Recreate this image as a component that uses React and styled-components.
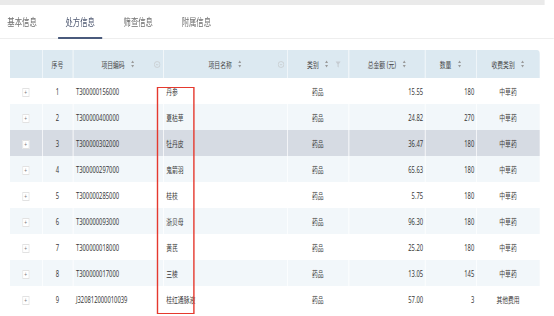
import React from 'react'
import styled, { createGlobalStyle } from 'styled-components'

const GlobalStyle = createGlobalStyle`
  body {
    margin: 0;
    background: #fff;
    font-family: "Noto Sans", "Noto Sans CJK SC", sans-serif;
  }
`

const rows = [
  { no: 1, code: 'T300000156000', name: '丹参', type: '药品', amount: '15.55', qty: 180, fee: '中草药' },
  { no: 2, code: 'T300000400000', name: '夏枯草', type: '药品', amount: '24.82', qty: 270, fee: '中草药' },
  { no: 3, code: 'T300000302000', name: '牡丹皮', type: '药品', amount: '36.47', qty: 180, fee: '中草药' },
  { no: 4, code: 'T300000297000', name: '鬼箭羽', type: '药品', amount: '65.63', qty: 180, fee: '中草药' },
  { no: 5, code: 'T300000285000', name: '桂枝', type: '药品', amount: '5.75', qty: 180, fee: '中草药' },
  { no: 6, code: 'T300000093000', name: '浙贝母', type: '药品', amount: '96.30', qty: 180, fee: '中草药' },
  { no: 7, code: 'T300000018000', name: '黄芪', type: '药品', amount: '25.20', qty: 180, fee: '中草药' },
  { no: 8, code: 'T300000017000', name: '三棱', type: '药品', amount: '13.05', qty: 145, fee: '中草药' },
  { no: 9, code: 'J320812000010039', name: '桂红通脉液', type: '药品', amount: '57.00', qty: 3, fee: '其他费用' },
]

const tabs = ['基本信息', '处方信息', '筛查信息', '附属信息']

// the screen is drawn condensed: lay out at full width, then squeeze horizontally
const Viewport = styled.div`
  width: 554px;
  height: 316px;
  overflow: hidden;
  background: #fff;
`
const Page = styled.div`
  width: 791px;
  transform: scaleX(0.7);
  transform-origin: left top;
`
const TopStrip = styled.div`
  height: 5px;
  margin-right: 13px;
  background: #eaeaea;
`
const TabBar = styled.div`
  display: flex;
  gap: 20px;
  height: 33px;
  border-bottom: 1px solid #eeeeee;
  font-family: "Noto Sans CJK SC", sans-serif;
`
const Tab = styled.div`
  display: flex;
  align-items: center;
  padding: 1px 10.5px 0;
  font-size: 10.5px;
  color: ${p => (p.$active ? '#4d5770' : '#6f6f6f')};
  border-bottom: 2px solid ${p => (p.$active ? '#4a5a7c' : 'transparent')};
  margin-bottom: -1px;
`
const TableWrap = styled.div`
  position: relative;
  margin: 11px 20px 0 14px;
`
const Table = styled.table`
  width: 757px;
  table-layout: fixed;
  border-collapse: collapse;
  font-size: 8.3px;
  color: #383838;
`
const Th = styled.th`
  height: 28px;
  padding: 0;
  background: #dce9f1;
  font-weight: normal;
  color: #444;
  border-left: 1.5px solid rgba(255, 255, 255, 0.8);
  &:first-child { border-left: none; }
  &:last-child { border-top-right-radius: 4px; }
`
const HeadInner = styled.div`
  display: grid;
  grid-template-columns: 1fr auto 1fr;
  align-items: center;
`
const HeadLabel = styled.span`
  grid-column: 2;
  display: flex;
  align-items: center;
  gap: 9px;
  white-space: nowrap;
`
const HeadExtra = styled.span`
  grid-column: 3;
  justify-self: ${p => p.$align || 'end'};
  margin-right: ${p => (p.$align ? '0' : '4px')};
  display: flex;
`
const Tr = styled.tr`
  height: 26px;
  background: ${p => (p.$selected ? '#d6dbe3' : p.$even ? '#f2f7fa' : '#fff')};
`
const Td = styled.td`
  padding: 0 ${p => (p.$align === 'right' ? '2px' : '4px')};
  text-align: ${p => p.$align || 'center'};
  border-left: 1.5px solid #fff;
  white-space: nowrap;
  &:first-child { border-left: none; }
`
const ExpandBtn = styled.span`
  display: inline-flex;
  align-items: center;
  justify-content: center;
  width: 8px;
  height: 7px;
  border: 1px solid #e2e2e2;
  background: #fff;
  color: #777;
  font-size: 7px;
  line-height: 1;
  vertical-align: middle;
`
const Highlight = styled.div`
  position: absolute;
  left: 210px;
  top: 37px;
  width: 54px;
  height: 227px;
  box-sizing: border-box;
  border: 1.5px solid #e5392e;
  border-left-width: 2px;
  border-right-width: 2px;
  pointer-events: none;
`

const SortIcon = () => (
  <svg width="5" height="8" viewBox="0 0 5 8">
    <path d="M2.5 0.5 L4.6 3 H0.4 Z" fill="#999" />
    <path d="M2.5 7.5 L4.6 5 H0.4 Z" fill="#999" />
  </svg>
)

const CircleIcon = () => (
  <svg width="9" height="7" viewBox="0 0 9 7">
    <ellipse cx="4.5" cy="3.5" rx="4.1" ry="3" fill="none" stroke="#bdbdbd" strokeWidth="0.6" />
    <path d="M3 3 L4.5 4.2 L6 3" fill="none" stroke="#bdbdbd" strokeWidth="0.6" />
  </svg>
)

const FilterIcon = () => (
  <svg width="8" height="7" viewBox="0 0 8 7">
    <path d="M0.4 0.5 H7.6 L4.8 3.2 V6.5 L3.2 5.8 V3.2 Z" fill="#c6ccd2" />
  </svg>
)

const columns = [
  { key: 'expand', width: 46 },
  { key: 'no', width: 44, title: '序号' },
  { key: 'code', width: 129, title: '项目编码', sort: true, extra: 'circle' },
  { key: 'name', width: 177, title: '项目名称', sort: true, extra: 'circle' },
  { key: 'type', width: 88, title: '类别', sort: true, extra: 'filter' },
  { key: 'amount', width: 109, title: '总金额 (元)', sort: true },
  { key: 'qty', width: 73, title: '数量', sort: true },
  { key: 'fee', width: 91, title: '收费类别', sort: true },
]

export default function App() {
  return (
    <Viewport>
      <GlobalStyle />
      <Page>
        <TopStrip />
        <TabBar>
          {tabs.map((t, i) => (
            <Tab key={t} $active={i === 1}>{t}</Tab>
          ))}
        </TabBar>
        <TableWrap>
          <Table>
            <colgroup>
              {columns.map(c => <col key={c.key} style={{ width: c.width }} />)}
            </colgroup>
            <thead>
              <tr>
                {columns.map(c => (
                  <Th key={c.key}>
                    <HeadInner>
                      {c.title && (
                        <HeadLabel>
                          {c.title}
                          {c.sort && <SortIcon />}
                        </HeadLabel>
                      )}
                      {c.extra === 'circle' && <HeadExtra><CircleIcon /></HeadExtra>}
                      {c.extra === 'filter' && <HeadExtra $align="center"><FilterIcon /></HeadExtra>}
                    </HeadInner>
                  </Th>
                ))}
              </tr>
            </thead>
            <tbody>
              {rows.map((r, i) => (
                <Tr key={r.no} $even={i % 2 === 1} $selected={i === 2}>
                  <Td><ExpandBtn>+</ExpandBtn></Td>
                  <Td>{r.no}</Td>
                  <Td $align="left">{r.code}</Td>
                  <Td $align="left">{r.name}</Td>
                  <Td>{r.type}</Td>
                  <Td $align="right">{r.amount}</Td>
                  <Td $align="right">{r.qty}</Td>
                  <Td>{r.fee}</Td>
                </Tr>
              ))}
            </tbody>
          </Table>
          <Highlight />
        </TableWrap>
      </Page>
    </Viewport>
  )
}
